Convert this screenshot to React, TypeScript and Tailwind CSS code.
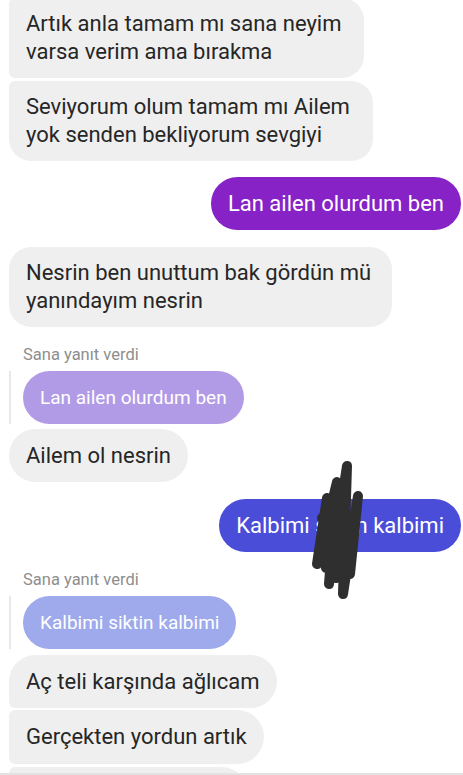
import React from 'react';

const font = { fontFamily: 'Roboto, "Noto Sans", sans-serif' };

const gray = 'bg-[#efefef] text-[#262626] text-[22px] leading-[28px] px-[17px] py-[12px]';

const ReplyBlock: React.FC<{ text: string; color: string; mt: string }> = ({ text, color, mt }) => (
  <div className={mt}>
    <div className="pl-[23px] text-[16.5px] leading-[20px] text-[#8e8e8e]">Sana yanıt verdi</div>
    <div className="mt-[6px] flex pl-[9px]">
      <div className="w-[2px] bg-[#e8e8e8]" />
      <div
        className={`ml-[12px] rounded-full px-[17px] py-[13px] text-[19px] leading-[27px] text-white ${color}`}
      >
        {text}
      </div>
    </div>
  </div>
);

// hand drawn redaction over the sent message
const Scribble: React.FC = () => (
  <svg
    className="absolute left-[81px] top-[-43px]"
    width="70"
    height="145"
    viewBox="0 0 70 145"
    fill="none"
  >
    <path
      d="M27 42 L17 108 L37 26 L29 128 L47 10 L43 138 L58 40 L50 118 M22 62 L46 34 L26 112 L54 66 L36 122 L40 50 M20 90 L33 60"
      stroke="#2f2f2f"
      strokeWidth="10"
      strokeLinecap="round"
      strokeLinejoin="round"
    />
  </svg>
);

const Chat: React.FC = () => {
  return (
    <div className="flex h-[775px] w-[463px] flex-col overflow-hidden bg-white" style={font}>
      <div className="flex-1 overflow-hidden">
        <div className="mt-[-2px] flex pl-[9px]">
          <div className={`${gray} w-[355px] rounded-[22px] rounded-tl-[6px] rounded-bl-[6px]`}>
            Artık anla tamam mı sana neyim varsa verim ama bırakma
          </div>
        </div>
        <div className="mt-[3px] flex pl-[9px]">
          <div className={`${gray} w-[364px] rounded-[22px] rounded-tl-[6px]`}>
            Seviyorum olum tamam mı Ailem yok senden bekliyorum sevgiyi
          </div>
        </div>

        <div className="mt-[16px] flex justify-end pr-[2px]">
          <div className="rounded-full bg-[#8622c6] px-[17px] py-[12px] text-[22px] leading-[29px] text-white">
            Lan ailen olurdum ben
          </div>
        </div>

        <div className="mt-[17px] flex pl-[9px]">
          <div className={`${gray} w-[383px] rounded-[22px]`}>
            Nesrin ben unuttum bak gördün mü yanındayım nesrin
          </div>
        </div>

        <ReplyBlock text="Lan ailen olurdum ben" color="bg-[#b29be6]" mt="mt-[18px]" />

        <div className="mt-[5px] flex pl-[9px]">
          <div className={`${gray} rounded-full leading-[29px]`}>Ailem ol nesrin</div>
        </div>

        <div className="mt-[17px] flex justify-end pr-[2px]">
          <div className="relative rounded-full bg-[#4a4dd8] px-[17px] py-[12px] text-[22px] leading-[29px] text-white">
            Kalbimi siktin kalbimi
            <Scribble />
          </div>
        </div>

        <ReplyBlock text="Kalbimi siktin kalbimi" color="bg-[#9eaaeb]" mt="mt-[18px]" />

        <div className="mt-[6px] flex pl-[9px]">
          <div className={`${gray} rounded-[27px] rounded-bl-[6px] leading-[29px]`}>
            Aç teli karşında ağlıcam
          </div>
        </div>
        <div className="mt-[2px] flex pl-[9px]">
          <div className={`${gray} rounded-[27px] rounded-tl-[6px] rounded-bl-[6px] leading-[30px]`}>
            Gerçekten yordun artık
          </div>
        </div>
        <div className="mt-[3px] flex pl-[9px]">
          <div className={`${gray} w-[239px] rounded-[27px] rounded-tl-[6px] leading-[29px]`}>&nbsp;</div>
        </div>
      </div>
      <div className="h-[2px] bg-[#e2e2e2]" />
    </div>
  );
};

export default Chat;
